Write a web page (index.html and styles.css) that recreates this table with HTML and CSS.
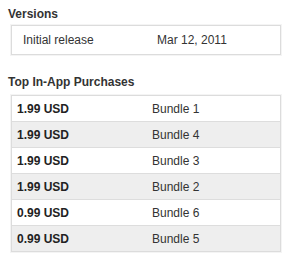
FILE: index.html
```html
<!DOCTYPE html>
<html>
<head>
<meta charset="utf-8">
<link rel="stylesheet" href="styles.css">
</head>
<body>
<div class="section">
  <h2 class="title">Versions</h2>
  <div class="box">
    <div class="row">
      <span class="c1">Initial release</span>
      <span class="c2">Mar 12, 2011</span>
    </div>
  </div>
</div>
<div class="section">
  <h2 class="title">Top In-App Purchases</h2>
  <div class="box">
    <div class="row iap"><span class="c1 price">1.99 USD</span><span class="c2">Bundle 1</span></div>
    <div class="row iap alt"><span class="c1 price">1.99 USD</span><span class="c2">Bundle 4</span></div>
    <div class="row iap"><span class="c1 price">1.99 USD</span><span class="c2">Bundle 3</span></div>
    <div class="row iap alt"><span class="c1 price">1.99 USD</span><span class="c2">Bundle 2</span></div>
    <div class="row iap"><span class="c1 price">0.99 USD</span><span class="c2">Bundle 6</span></div>
    <div class="row iap alt"><span class="c1 price">0.99 USD</span><span class="c2">Bundle 5</span></div>
  </div>
</div>
</body>
</html>
```
FILE: styles.css
```css
html, body {
  margin: 0;
  padding: 0;
  background: #fff;
}
body {
  font-family: "Liberation Sans", Arial, sans-serif;
  font-size: 12px;
  color: #333;
  padding: 7px 5px 0 8px;
}
.section {
  margin-bottom: 20px;
}
.title {
  margin: 0 0 4px 0;
  font-size: 12px;
  font-weight: bold;
  color: #333;
  line-height: 14px;
}
.section + .section .title {
  margin-bottom: 6px;
}
.box {
  margin-left: 3px;
  width: 268px;
  border: 1px solid #dcdcdc;
  box-shadow: 0 0 0 1px #f4f4f4;
}
.row {
  display: flex;
  height: 28px;
  align-items: center;
  padding-left: 11px;
}
.row .c1 {
  width: 134px;
}
.iap {
  height: 25px;
  padding-left: 5px;
  border-top: 1px solid #ddd;
}
.iap:first-child {
  border-top: none;
}
.iap .c1 {
  width: 135px;
}
.alt {
  background: #eeeeee;
}
.price {
  font-weight: bold;
  color: #222;
}
```
